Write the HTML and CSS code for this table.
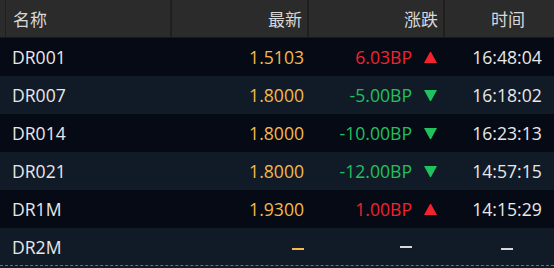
FILE: index.html
```html
<!DOCTYPE html>
<html>
<head>
<meta charset="utf-8">
<link rel="stylesheet" href="styles.css">
</head>
<body>
<div class="table">
  <div class="row head">
    <div class="c name">名称</div>
    <div class="c last">最新</div>
    <div class="c chg">涨跌</div>
    <div class="c time">时间</div>
  </div>
  <div class="row dark">
    <div class="c name">DR001</div>
    <div class="c last yel">1.5103</div>
    <div class="c chg up">6.03BP<span class="arr tri-up"></span></div>
    <div class="c time">16:48:04</div>
  </div>
  <div class="row light">
    <div class="c name">DR007</div>
    <div class="c last yel">1.8000</div>
    <div class="c chg down">-5.00BP<span class="arr tri-down"></span></div>
    <div class="c time">16:18:02</div>
  </div>
  <div class="row dark">
    <div class="c name">DR014</div>
    <div class="c last yel">1.8000</div>
    <div class="c chg down">-10.00BP<span class="arr tri-down"></span></div>
    <div class="c time">16:23:13</div>
  </div>
  <div class="row light">
    <div class="c name">DR021</div>
    <div class="c last yel">1.8000</div>
    <div class="c chg down">-12.00BP<span class="arr tri-down"></span></div>
    <div class="c time">14:57:15</div>
  </div>
  <div class="row dark">
    <div class="c name">DR1M</div>
    <div class="c last yel">1.9300</div>
    <div class="c chg up">1.00BP<span class="arr tri-up"></span></div>
    <div class="c time">14:15:29</div>
  </div>
  <div class="row light last-row">
    <div class="c name">DR2M</div>
    <div class="c last"><span class="dash yelbg"></span></div>
    <div class="c chg"><span class="dash"></span><span class="arr"></span></div>
    <div class="c time"><span class="dash"></span></div>
  </div>
</div>
</body>
</html>
```
FILE: styles.css
```css
html, body {
  margin: 0;
  padding: 0;
  background: #111a27;
}
body {
  width: 554px;
  height: 268px;
  overflow: hidden;
  font-family: "Open Sans", "Noto Sans CJK SC", sans-serif;
  font-size: 17.6px;
  color: #e8e8e8;
}
.table {
  display: flex;
  flex-direction: column;
}
.row {
  display: grid;
  grid-template-columns: 170px 137px 136px 111px;
  height: 38px;
  align-items: center;
}
.head {
  height: 38px;
  background: #2b2b2b;
  color: #d8d8d8;
  font-family: "Noto Sans CJK SC", sans-serif;
  font-size: 17px;
  border-bottom: 1px solid #1a1a1a;
  box-sizing: border-box;
}
.head .c {
  height: 37px;
  display: flex;
  align-items: center;
  border-left: 2px solid #1f1f1f;
}
.head .name { border-left: 0; box-shadow: inset 5px 0 0 #2b2b2b, inset 6px 0 0 #1f1f1f; padding-left: 13px; }
.head .last { justify-content: flex-end; padding-right: 5px; }
.head .chg { justify-content: flex-end; padding-right: 5px; }
.head .time { justify-content: center; padding-left: 17px; }
.dark { background: #050a15; }
.light { background: #111a27; }
.last-row { border-bottom: 1px dashed #6a7078; height: 38px; box-sizing: border-box; }
.c { box-sizing: border-box; white-space: nowrap; }
.name { padding-left: 12px; }
.last { text-align: right; padding-right: 3px; }
.chg { display: flex; justify-content: flex-end; align-items: center; padding-right: 6px; }
.time { text-align: center; padding-left: 17px; }
.yel { color: #f6b84a; }
.up { color: #f2232d; }
.down { color: #21c15d; }
.arr {
  display: inline-block;
  width: 13px;
  height: 11px;
  margin-left: 12px;
  box-sizing: border-box;
}
.tri-up {
  border-left: 6.5px solid transparent;
  border-right: 6.5px solid transparent;
  border-bottom: 11px solid #f2232d;
}
.tri-down {
  border-left: 6.5px solid transparent;
  border-right: 6.5px solid transparent;
  border-top: 11px solid #21c15d;
}
.dash {
  display: inline-block;
  width: 12px;
  height: 2px;
  background: #d8d8d8;
  vertical-align: middle;
}
.dash.yelbg { background: #f6b84a; }
```
